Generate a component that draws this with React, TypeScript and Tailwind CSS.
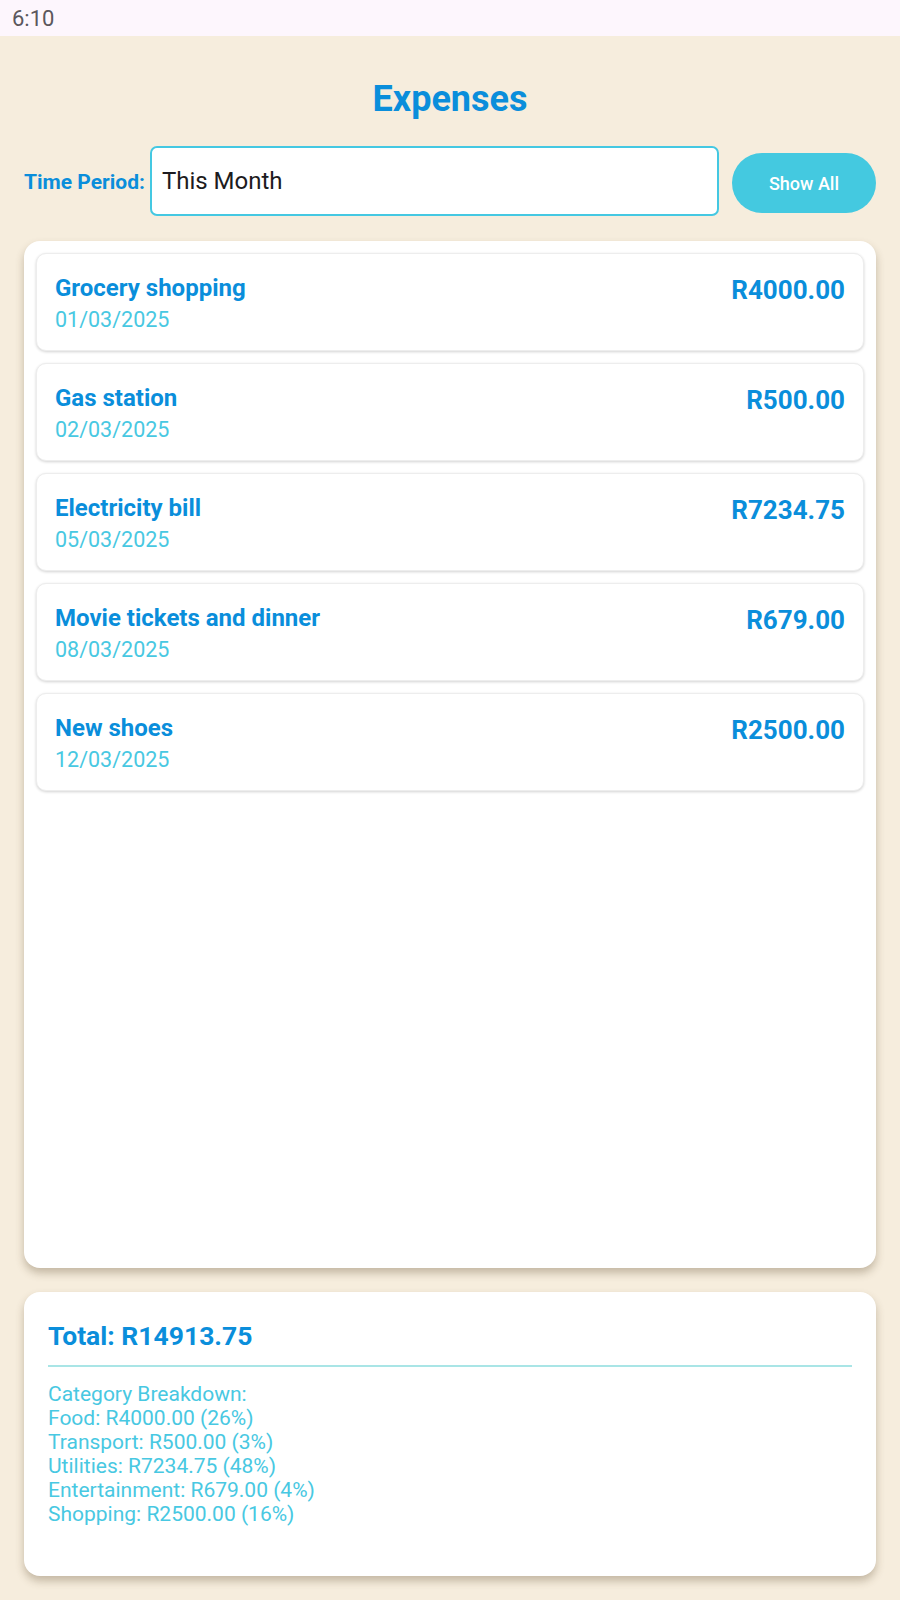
import React from "react";

const expenses = [
  { title: "Grocery shopping", date: "01/03/2025", amount: "R4000.00" },
  { title: "Gas station", date: "02/03/2025", amount: "R500.00" },
  { title: "Electricity bill", date: "05/03/2025", amount: "R7234.75" },
  { title: "Movie tickets and dinner", date: "08/03/2025", amount: "R679.00" },
  { title: "New shoes", date: "12/03/2025", amount: "R2500.00" },
];

const breakdown = [
  "Food: R4000.00 (26%)",
  "Transport: R500.00 (3%)",
  "Utilities: R7234.75 (48%)",
  "Entertainment: R679.00 (4%)",
  "Shopping: R2500.00 (16%)",
];

export default function App() {
  return (
    <div className="h-screen flex flex-col bg-[#f6eddd] font-['Roboto',sans-serif]">
      {/* Status bar */}
      <div className="h-9 shrink-0 bg-[#fdf6fd] flex items-center px-3">
        <span className="text-[22px] text-[#5b575c]">6:10</span>
      </div>

      <div className="flex-1 flex flex-col px-6 pb-6 min-h-0">
        <h1 className="mt-[42px] text-center text-[36px] leading-[42px] font-bold text-[#0a8edb]">
          Expenses
        </h1>

        {/* Filter row */}
        <div className="mt-[26px] flex items-center">
          <span className="mt-1 text-[21px] font-bold text-[#0a8edb] mr-[5px] whitespace-nowrap">
            Time Period:
          </span>
          <div className="flex-1 h-[70px] bg-white border-2 border-[#44c8e2] rounded-[7px] flex items-center px-[10px]">
            <span className="text-[24px] text-[#1d1b20]">This Month</span>
          </div>
          <button className="ml-[13px] w-[144px] h-[60px] rounded-full bg-[#44c9e0] text-white text-[18px] font-medium mt-[4px]">
            Show All
          </button>
        </div>

        {/* Expense list */}
        <div className="mt-[25px] flex-1 bg-white rounded-[16px] shadow-[0_5px_8px_rgba(80,60,30,0.3)] p-3 flex flex-col gap-3">
          {expenses.map((e) => (
            <div
              key={e.title}
              className="bg-white border border-[#ededed] rounded-[10px] shadow-[0_1px_3px_rgba(0,0,0,0.18)] px-[18px] pt-[19px] pb-[16px] flex justify-between"
            >
              <div className="flex flex-col">
                <span className="text-[24px] leading-[30px] font-bold text-[#0a8edb]">{e.title}</span>
                <span className="mt-[3px] text-[21.5px] leading-[28px] text-[#48c8e2]">{e.date}</span>
              </div>
              <span className="mt-[2px] text-[26px] leading-[30px] font-bold text-[#0a8edb]">{e.amount}</span>
            </div>
          ))}
        </div>

        {/* Summary */}
        <div className="mt-6 bg-white rounded-[16px] shadow-[0_5px_8px_rgba(80,60,30,0.3)] px-6 pt-6 pb-[50px]">
          <div className="text-[26.5px] leading-[39px] font-bold text-[#0a8edb]">Total: R14913.75</div>
          <div className="mt-[10px] h-[2px] bg-[#a9e5e6]" />
          <div className="mt-[15px] text-[21px] leading-[24px] text-[#48c8e2]">
            <div>Category Breakdown:</div>
            {breakdown.map((b) => (
              <div key={b}>{b}</div>
            ))}
          </div>
        </div>
      </div>
    </div>
  );
}
